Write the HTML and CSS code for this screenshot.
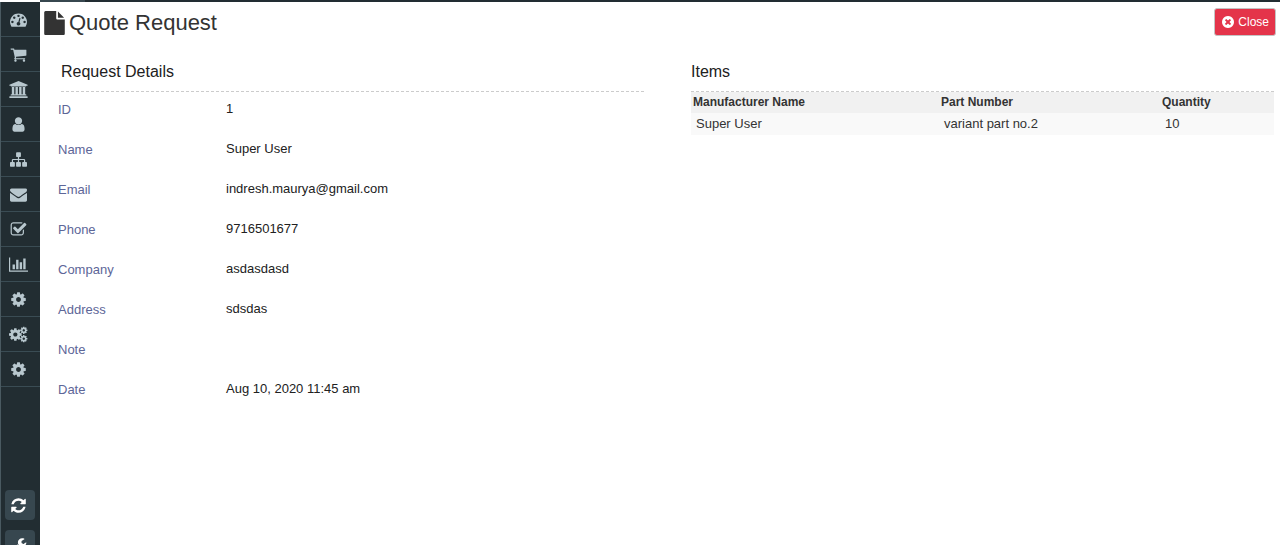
FILE: index.html
```
<!DOCTYPE html>
<html lang="en">
<head>
    <meta charset="UTF-8">
    <meta name="viewport" content="width=device-width, initial-scale=1.0">
    <title>Quote Request</title>
    <link rel="stylesheet" href="styles.css">
</head>
<body>
    <svg class="sprite" aria-hidden="true">
        <symbol id="cog" viewBox="0 0 1792 1792">
            <path d="M1152 896q0-106-75-181t-181-75-181 75-75 181 75 181 181 75 181-75 75-181zm512-109v222q0 12-8 23t-20 13l-185 28q-19 54-39 91 35 50 107 138 10 12 10 25t-9 23q-27 37-99 108t-94 71q-12 0-26-9l-138-108q-44 23-91 38-16 136-29 186-7 28-36 28h-222q-14 0-24.5-8.5t-11.5-21.5l-28-184q-49-16-90-37l-141 107q-10 9-25 9-14 0-25-11-126-114-165-168-7-10-7-23 0-12 8-23 15-21 51-66.5t54-70.5q-27-50-41-99l-183-27q-13-2-21-12.5t-8-23.5v-222q0-12 8-23t19-13l186-28q14-46 39-92-40-57-107-138-10-12-10-24 0-10 9-23 26-36 98.5-107.5t94.5-71.5q13 0 26 10l138 107q44-23 91-38 16-136 29-186 7-28 36-28h222q14 0 24.5 8.5t11.5 21.5l28 184q49 16 90 37l142-107q9-9 24-9 13 0 25 10 129 119 165 170 7 8 7 22 0 12-8 23-15 21-51 66.5t-54 70.5q26 50 41 98l183 28q13 2 21 12.5t8 23.5z"/>
        </symbol>
    </svg>

    <div class="topbar"><div class="topbar-logo"></div></div>

    <div class="wrapper">
        <aside class="sidebar">
            <nav class="menu">
                <a href="#" aria-label="Dashboard"><svg class="icon" viewBox="0 0 1792 1792"><path d="M384 1152q0-53-37.500-90.500t-90.500-37.500-90.500 37.500-37.500 90.500 37.500 90.500 90.500 37.500 90.500-37.500 37.500-90.500zm192-448q0-53-37.500-90.500t-90.500-37.500-90.500 37.500-37.500 90.500 37.500 90.500 90.500 37.500 90.500-37.500 37.500-90.500zm428 481l101-382q6-26-7.500-48.500t-38.500-29.500-48 6.500-30 39.500l-101 382q-60 5-107 43.500t-63 98.500q-20 77 20 146t117 89 146-20 89-117q16-60-6-117t-72-91zm660-33q0-53-37.500-90.500t-90.500-37.500-90.500 37.500-37.500 90.500 37.500 90.500 90.500 37.500 90.500-37.500 37.500-90.500zm-640-640q0-53-37.500-90.500t-90.500-37.500-90.500 37.500-37.500 90.500 37.500 90.500 90.500 37.500 90.500-37.500 37.500-90.500zm448 192q0-53-37.500-90.500t-90.500-37.500-90.500 37.500-37.500 90.500 37.500 90.500 90.500 37.500 90.500-37.500 37.500-90.500zm320 448q0 261-141 483-19 29-54 29h-1402q-35 0-54-29-141-221-141-483 0-182 71-348t191-286 286-191 348-71 348 71 286 191 191 286 71 348z"/></svg></a>
                <a href="#" aria-label="Orders"><svg class="icon" viewBox="0 0 1792 1792"><path d="M704 1536q0 52-38 90t-90 38-90-38-38-90 38-90 90-38 90 38 38 90zm896 0q0 52-38 90t-90 38-90-38-38-90 38-90 90-38 90 38 38 90zm128-1088v512q0 24-16.5 42.5t-40.5 21.5l-1044 122q13 60 13 70 0 16-24 64h920q26 0 45 19t19 45-19 45-45 19h-1024q-26 0-45-19t-19-45q0-11 8-31.5t16-36 21.5-40 15.5-29.500l-177-823h-204q-26 0-45-19t-19-45 19-45 45-19h256q16 0 28.500 6.500t19.500 15.500 13 24.500 8 26 5.500 29.500 4.500 26h1201q26 0 45 19t19 45z"/></svg></a>
                <a href="#" aria-label="Manufacturers"><svg class="icon icon-wide" viewBox="0 0 1920 1792"><path d="M960 0l960 384v128h-128q0 26-20.5 45t-48.5 19h-1526q-28 0-48.5-19t-20.500-45h-128v-128zm-704 640h256v768h128v-768h256v768h128v-768h256v768h128v-768h256v768h59q28 0 48.500 19t20.500 45v64h-1664v-64q0-26 20.500-45t48.500-19h59v-768zm1595 960q28 0 48.500 19t20.500 45v128h-1920v-128q0-26 20.500-45t48.500-19h1782z"/></svg></a>
                <a href="#" aria-label="Users"><svg class="icon" viewBox="0 0 1792 1792"><path d="M1536 1399q0 109-62.5 187t-150.5 78h-854q-88 0-150.5-78t-62.500-187q0-85 8.500-160.500t31.500-152 58.500-131 94-89 134.500-34.500q131 128 313 128t313-128q76 0 134.500 34.500t94 89 58.500 131 31.500 152 8.500 160.500zm-256-887q0 159-112.500 271.500t-271.500 112.500-271.500-112.500-112.500-271.500 112.500-271.500 271.500-112.500 271.500 112.500 112.500 271.500z"/></svg></a>
                <a href="#" aria-label="Categories"><svg class="icon" viewBox="0 0 1792 1792"><path d="M1792 1248v320q0 40-28 68t-68 28h-320q-40 0-68-28t-28-68v-320q0-40 28-68t68-28h96v-192h-512v192h96q40 0 68 28t28 68v320q0 40-28 68t-68 28h-320q-40 0-68-28t-28-68v-320q0-40 28-68t68-28h96v-192h-512v192h96q40 0 68 28t28 68v320q0 40-28 68t-68 28h-320q-40 0-68-28t-28-68v-320q0-40 28-68t68-28h96v-192q0-52 38-90t90-38h512v-192h-96q-40 0-68-28t-28-68v-320q0-40 28-68t68-28h320q40 0 68 28t28 68v320q0 40-28 68t-68 28h-96v192h512q52 0 90 38t38 90v192h96q40 0 68 28t28 68z"/></svg></a>
                <a href="#" aria-label="Messages"><svg class="icon" viewBox="0 0 1792 1792"><path d="M1792 710v794q0 66-47 113t-113 47h-1472q-66 0-113-47t-47-113v-794q44 49 101 87 362 246 497 345 57 42 92.500 65.500t94.500 48 110 24.500h2q51 0 110-24.500t94.500-48 92.500-65.500q170-123 498-345 57-39 100-87zm0-294q0 79-49 151t-122 123q-376 261-468 325-10 7-42.500 30.500t-54 38-52 32.500-57.500 27-50 9h-2q-23 0-50-9t-57.500-27-52-32.500-54-38-42.500-30.500q-91-64-262-182.500t-205-142.500q-62-42-117-115.500t-55-136.500q0-78 41.500-130t118.500-52h1472q65 0 112.500 47t47.500 113z"/></svg></a>
                <a href="#" aria-label="Tasks"><svg class="icon" viewBox="0 0 1792 1792"><path d="M1472 930v318q0 119-84.500 203.500t-203.500 84.500h-832q-119 0-203.500-84.500t-84.500-203.500v-832q0-119 84.500-203.500t203.500-84.500h832q63 0 117 25 15 7 18 23 3 17-9 29l-49 49q-10 10-23 10-3 0-9-2-23-6-45-6h-832q-66 0-113 47t-47 113v832q0 66 47 113t113 47h832q66 0 113-47t47-113v-254q0-13 9-22l64-64q10-10 23-10 6 0 12 3 20 8 20 29zm231-489l-814 814q-24 24-57 24t-57-24l-430-430q-24-24-24-57t24-57l110-110q24-24 57-24t57 24l263 263 647-647q24-24 57-24t57 24l110 110q24 24 24 57t-24 57z"/></svg></a>
                <a href="#" aria-label="Reports"><svg class="icon icon-wide" viewBox="0 0 2048 1792"><path d="M640 896v512h-256v-512h256zm384-512v1024h-256v-1024h256zm1024 1152v128h-2048v-1536h128v1408h1920zm-640-896v768h-256v-768h256zm384-384v1152h-256v-1152h256z"/></svg></a>
                <a href="#" aria-label="Settings"><svg class="icon"><use href="#cog"/></svg></a>
                <a href="#" aria-label="Configuration"><svg class="icon icon-wide" viewBox="0 0 18 16"><use href="#cog" x="-1" y="1" width="14" height="14"/><use href="#cog" x="10" y="0" width="8" height="8"/><use href="#cog" x="10" y="8" width="8" height="8"/></svg></a>
                <a href="#" aria-label="System"><svg class="icon"><use href="#cog"/></svg></a>
            </nav>
            <div class="tools">
                <button type="button" aria-label="Refresh"><svg class="icon" viewBox="0 0 1792 1792"><path d="M1639 1056q0 5-1 7-64 268-268 434.500t-478 166.500q-146 0-282.500-55t-243.500-157l-129 129q-19 19-45 19t-45-19-19-45v-448q0-26 19-45t45-19h448q26 0 45 19t19 45-19 45l-137 137q71 66 161 102t187 36q134 0 250-65t186-179q11-17 53-117 8-23 30-23h192q13 0 22.500 9.500t9.500 22.500zm25-800v448q0 26-19 45t-45 19h-448q-26 0-45-19t-19-45 19-45l138-138q-148-137-349-137-134 0-250 65t-186 179q-11 17-53 117-8 23-30 23h-199q-13 0-22.500-9.500t-9.500-22.500v-7q65-268 270-434.500t480-166.500q146 0 284 55.500t245 156.500l130-129q19-19 45-19t45 19 19 45z"/></svg></button>
                <button type="button" aria-label="Tools"><svg class="icon" viewBox="0 0 1792 1792"><path d="M448 1472q0-26-19-45t-45-19-45 19-19 45 19 45 45 19 45-19 19-45zm644-420l-682 682q-37 37-90 37-52 0-91-37l-106-108q-38-36-38-90 0-53 38-91l681-681q39 98 114.500 173.500t173.500 114.500zm634-435q0 39-23 106-47 134-164.500 217.500t-258.500 83.500q-185 0-316.500-131.500t-131.500-316.500 131.500-316.500 316.500-131.500q58 0 121.500 16.500t107.500 46.500q16 11 16 28t-16 28l-293 169v224l193 107q5-3 79-48.500t135.500-81 70.500-35.500q15 0 23.500 10t8.500 25z"/></svg></button>
            </div>
        </aside>

        <main class="content">
            <header class="page-header">
                <h1>
                    <svg class="icon-file" viewBox="128 0 1536 1792"><path d="M1152 512v-472q22 14 36 28l408 408q14 14 28 36h-472zm-128 32q0 40 28 68t68 28h544v1056q0 40-28 68t-68 28h-1344q-40 0-68-28t-28-68v-1600q0-40 28-68t68-28h800v544z"/></svg>
                    Quote Request
                </h1>
                <button type="button" class="btn-close">
                    <svg class="icon-close" viewBox="128 128 1536 1536"><path d="M1277 1122q0-26-19-45l-181-181 181-181q19-19 19-45 0-27-19-46l-90-90q-19-19-46-19-26 0-45 19l-181 181-181-181q-19-19-45-19-27 0-46 19l-90 90q-19 19-19 46 0 26 19 45l181 181-181 181q-19 19-19 45 0 27 19 46l90 90q19 19 46 19 26 0 45-19l181-181 181 181q19 19 45 19 27 0 46-19l90-90q19-19 19-46zm387-226q0 209-103 385.500t-279.500 279.500-385.500 103-385.500-103-279.500-279.500-103-385.500 103-385.500 279.500-279.500 385.500-103 385.500 103 279.500 279.500 103 385.500z"/></svg>
                    Close
                </button>
            </header>

            <div class="columns">
                <section>
                    <h2>Request Details</h2>
                    <dl class="details">
                        <dt>ID</dt><dd>1</dd>
                        <dt>Name</dt><dd>Super User</dd>
                        <dt>Email</dt><dd>indresh.maurya@gmail.com</dd>
                        <dt>Phone</dt><dd>9716501677</dd>
                        <dt>Company</dt><dd>asdasdasd</dd>
                        <dt>Address</dt><dd>sdsdas</dd>
                        <dt>Note</dt><dd></dd>
                        <dt>Date</dt><dd>Aug 10, 2020 11:45 am</dd>
                    </dl>
                </section>

                <section>
                    <h2>Items</h2>
                    <div class="items">
                        <table>
                            <thead>
                                <tr>
                                    <th class="col-name">Manufacturer Name</th>
                                    <th class="col-part">Part Number</th>
                                    <th>Quantity</th>
                                </tr>
                            </thead>
                            <tbody>
                                <tr>
                                    <td>Super User</td>
                                    <td>variant part no.2</td>
                                    <td>10</td>
                                </tr>
                            </tbody>
                        </table>
                    </div>
                </section>
            </div>
        </main>
    </div>
</body>
</html>
```

FILE: styles.css
```
* {
  box-sizing: border-box;
}

body {
  margin: 0;
  height: 100vh;
  display: flex;
  flex-direction: column;
  overflow: hidden;
  font-family: "Liberation Sans", Arial, sans-serif;
  font-size: 13px;
  color: #333333;
  background-color: #ffffff;
}

.sprite {
  position: absolute;
  width: 0;
  height: 0;
}

.topbar {
  flex: none;
  height: 2px;
  margin-left: 40px;
  background-color: #222d32;
}

.topbar-logo {
  width: 45px;
  height: 2px;
  background-color: #37474f;
}

.wrapper {
  flex: 1;
  min-height: 0;
  display: flex;
}

/* sidebar */
.sidebar {
  flex: none;
  width: 40px;
  overflow: hidden;
  border-left: 1px solid #4a5a61;
  background-color: #222d32;
}

.menu a {
  display: flex;
  align-items: center;
  justify-content: center;
  height: 35px;
  padding-right: 4px;
  border-bottom: 1px solid #3a4c54;
  color: #b8c7ce;
}

.icon {
  width: 17px;
  height: 17px;
  fill: currentColor;
}

.icon-wide {
  width: 19px;
}

.tools {
  display: flex;
  flex-direction: column;
  gap: 10px;
  padding: 103px 5px 0 4px;
}

.tools button {
  display: flex;
  align-items: center;
  justify-content: center;
  height: 30px;
  padding: 0 3px 0 0;
  border: none;
  border-radius: 4px;
  background-color: #37474f;
  color: #ffffff;
  cursor: pointer;
}

/* content */
.content {
  flex: 1;
  min-width: 0;
}

.page-header {
  display: flex;
  justify-content: space-between;
  align-items: flex-start;
  padding: 6px 4px 0;
}

h1 {
  display: flex;
  align-items: center;
  gap: 4px;
  margin: 0;
  font-size: 22px;
  line-height: 30px;
  font-weight: normal;
}

.icon-file {
  width: 21px;
  height: 24px;
  fill: #333333;
}

.btn-close {
  display: flex;
  align-items: center;
  gap: 4px;
  height: 28px;
  padding: 0 6px 0 7px;
  border: 1px solid #c4c4c4;
  border-radius: 3px;
  background-color: #e4344a;
  color: #ffffff;
  font-family: inherit;
  font-size: 12px;
  cursor: pointer;
}

.icon-close {
  width: 12px;
  height: 12px;
  fill: #ffffff;
}

.columns {
  display: grid;
  grid-template-columns: 1fr 1fr;
  gap: 44px;
  padding: 24px 6px 0 18px;
}

h2 {
  margin: 0 0 0 3px;
  padding-bottom: 9px;
  border-bottom: 1px dashed #cccccc;
  font-size: 16px;
  line-height: 20px;
  font-weight: normal;
  color: #212121;
}

.details {
  display: grid;
  grid-template-columns: 168px 1fr;
  grid-auto-rows: 40px;
  margin: 0;
  line-height: 16px;
}

.details dt {
  padding-top: 10px;
  color: #5d6698;
}

.details dd {
  margin: 0;
  padding-top: 9px;
  color: #212121;
}

.items {
  margin-left: 3px;
}

table {
  width: 100%;
  table-layout: fixed;
  border-collapse: collapse;
}

th, td {
  text-align: left;
  line-height: 16px;
}

th {
  padding: 2px 2px 3px;
  font-size: 12px;
  background-color: #f1f1f1;
}

td {
  padding: 3px 5px;
  background-color: #f9f9f9;
}

.col-name {
  width: 248px;
}

.col-part {
  width: 221px;
}
```
